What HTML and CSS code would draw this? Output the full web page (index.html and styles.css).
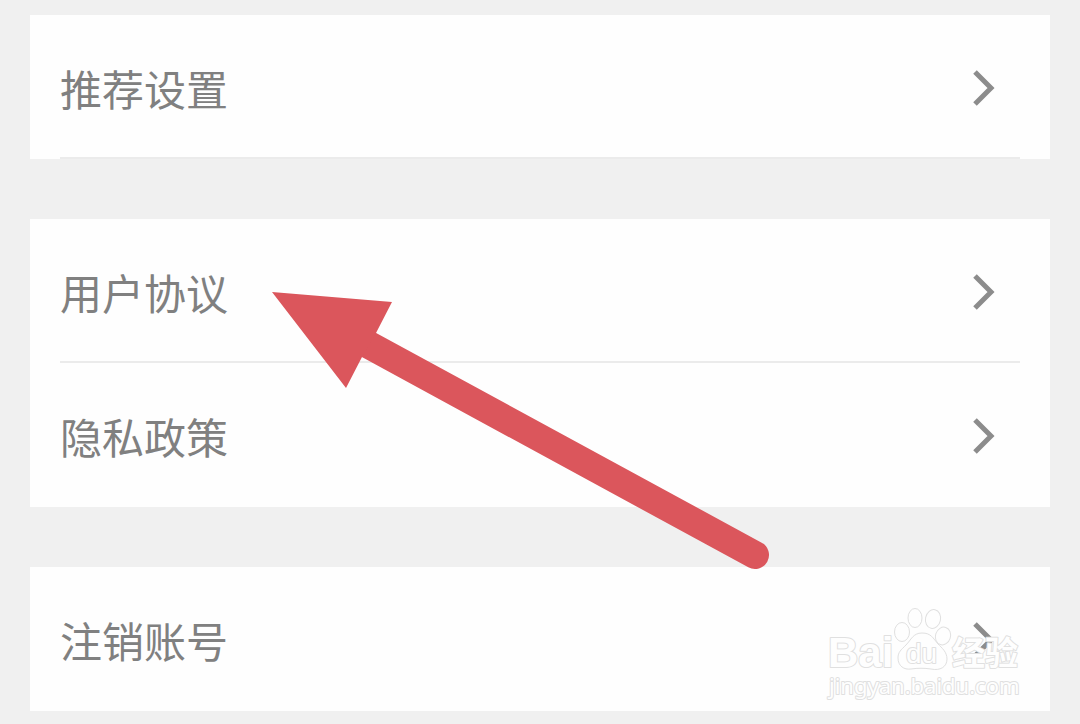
FILE: index.html
```html
<!DOCTYPE html>
<html lang="zh-CN">
<head>
  <meta charset="UTF-8" />
  <meta name="viewport" content="width=device-width, initial-scale=1.0" />
  <title>设置</title>
  <link rel="stylesheet" href="styles.css">
</head>
<body>
  <main class="settings">
    <nav class="card">
      <a class="row row-line" href="#recommend">
        <span>推荐设置</span>
        <svg class="chevron" viewBox="0 0 24 36" aria-hidden="true"><path d="M3 2 19 18 3 34"/></svg>
      </a>
    </nav>

    <nav class="card">
      <a class="row row-line" href="#agreement">
        <span>用户协议</span>
        <svg class="chevron" viewBox="0 0 24 36" aria-hidden="true"><path d="M3 2 19 18 3 34"/></svg>
      </a>
      <a class="row" href="#privacy">
        <span>隐私政策</span>
        <svg class="chevron" viewBox="0 0 24 36" aria-hidden="true"><path d="M3 2 19 18 3 34"/></svg>
      </a>
      <svg class="pointer" viewBox="0 0 502 282" aria-hidden="true">
        <path class="pointer-shaft" d="M99 55 485 265"/>
        <path class="pointer-head" d="M2 2 122 12 106 43 92 67 76 98Z"/>
      </svg>
    </nav>

    <nav class="card">
      <a class="row" href="#close-account">
        <span>注销账号</span>
        <svg class="chevron" viewBox="0 0 24 36" aria-hidden="true"><path d="M3 2 19 18 3 34"/></svg>
      </a>
      <svg class="watermark" viewBox="0 0 210 104" role="img" aria-label="Baidu 经验">
        <text class="mark-bai" x="8" y="68">Bai</text>
        <!-- paw -->
        <ellipse cx="82" cy="33" rx="7.5" ry="9.5"/>
        <ellipse cx="95" cy="19" rx="7" ry="9.5"/>
        <ellipse cx="113" cy="20" rx="7.5" ry="9.5" transform="rotate(12 113 20)"/>
        <ellipse cx="123" cy="37" rx="7.5" ry="9" transform="rotate(18 123 37)"/>
        <path d="M102 34C93 34 91 41 86 46C81 51 78 53 78 59C78 67 84 71 91 70C98 69 104 69 111 70C120 72 127 68 127 60C127 53 122 49 118 45C113 39 111 34 102 34Z"/>
        <text class="mark-du" x="86" y="64">du</text>
        <text class="mark-cn" x="132" y="66">经验</text>
        <text class="mark-url" x="9" y="95">jingyan.baidu.com</text>
      </svg>
    </nav>
  </main>
</body>
</html>
```
FILE: styles.css
```css
:root {
  --page-bg: #f0f0f0;
  --card-bg: #fefefe;
  --text: #808080;
  --line: #ebebeb;
  --pointer: #db565c;
}

* {
  box-sizing: border-box;
  margin: 0;
  padding: 0;
}

body {
  background: var(--page-bg);
  color: var(--text);
  font-family: "Noto Sans CJK SC", sans-serif;
  font-size: 42px;
  line-height: 60px;
}

.settings {
  display: flex;
  flex-direction: column;
  gap: 60px;
  padding: 15px 30px 12px;
}

.card {
  position: relative;
  background: var(--card-bg);
}

.row {
  display: flex;
  align-items: center;
  justify-content: space-between;
  height: 144px;
  margin: 0 30px;
  padding-top: 4px;
  padding-right: 24px;
  border-bottom: 2px solid transparent;
  color: inherit;
  text-decoration: none;
}

.row-line {
  border-bottom-color: var(--line);
}

.chevron {
  width: 24px;
  height: 36px;
  fill: none;
  stroke: #8c8c8c;
  stroke-width: 5;
}

/* red arrow, runs down over the next card */
.pointer {
  position: absolute;
  z-index: 1;
  top: 71px;
  left: 240px;
  width: 502px;
  height: 282px;
  pointer-events: none;
}

.pointer-head {
  fill: var(--pointer);
}

.pointer-shaft {
  stroke: var(--pointer);
  stroke-width: 28;
  stroke-linecap: round;
}

.watermark {
  position: absolute;
  right: 20px;
  bottom: 8px;
  width: 210px;
  height: 104px;
  fill: #fefefe;
  stroke: #e0e0e0;
  stroke-width: 1;
  pointer-events: none;
}

.watermark text {
  paint-order: stroke;
  stroke-width: 2;
  stroke-linejoin: round;
}

.mark-bai {
  font: bold 42px "Liberation Sans", sans-serif;
}

.mark-du {
  font: 28px "Liberation Sans", sans-serif;
}

.mark-cn {
  font: bold 33px "Noto Sans CJK SC", sans-serif;
}

.mark-url {
  font: 22px "Noto Sans", sans-serif;
}
```
